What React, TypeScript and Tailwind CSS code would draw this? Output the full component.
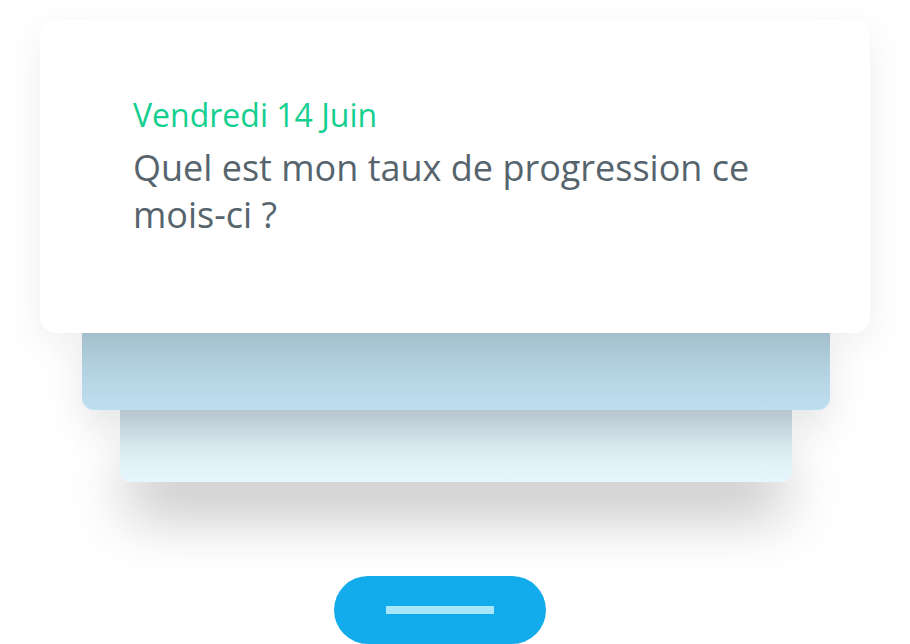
import React from "react";

export default function App() {
  return (
    <div
      className="w-[910px] h-[644px] overflow-hidden bg-white flex flex-col items-start"
      style={{ fontFamily: '"Open Sans", "Noto Sans", sans-serif' }}
    >
      <div className="relative z-30 mt-[20px] ml-[40px] w-[830px] h-[313px] bg-white rounded-[16px] shadow-[0_12px_40px_rgba(0,0,0,0.07)] pl-[93px] pr-[93px] pt-[75px]">
        <div className="text-[32px] leading-[40px] text-[#14cf8f]">Vendredi 14 Juin</div>
        <div className="mt-[9px] text-[36px] leading-[47px] text-[#56646d]">
          Quel est mon taux de progression ce mois-ci ?
        </div>
      </div>
      <div className="relative z-20 ml-[82px] w-[748px] h-[77px] rounded-b-[12px] bg-gradient-to-b from-[#acc9d6] to-[#bedff0] shadow-[0_18px_40px_rgba(0,0,0,0.10)]" />
      <div className="relative z-10 ml-[120px] w-[672px] h-[72px] rounded-b-[10px] bg-gradient-to-b from-[#c8d8e0] via-[#dcecf3] to-[#e6f6fd] shadow-[0_40px_60px_-8px_rgba(0,0,0,0.25)]" />
      <div className="mt-[94px] ml-[334px] w-[212px] h-[68px] rounded-full bg-[#12abeb] flex items-center justify-center">
        <div className="w-[108px] h-[8px] bg-[#a6e7fc]" />
      </div>
    </div>
  );
}
